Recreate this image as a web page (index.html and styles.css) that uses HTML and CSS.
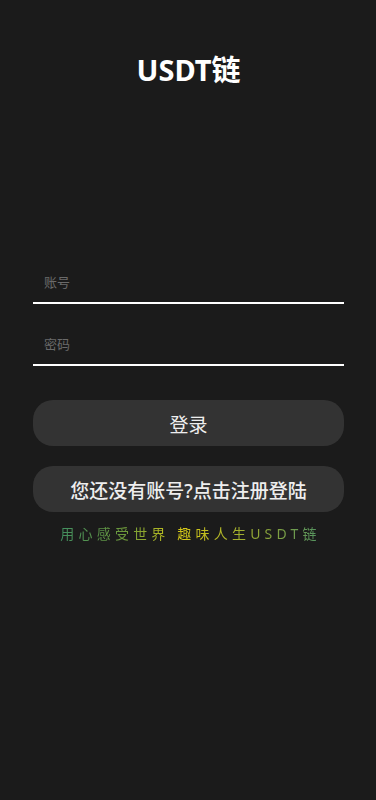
FILE: index.html
```
<!DOCTYPE html>
<html lang="zh-CN">
  <head>
    <meta charset="UTF-8" />
    <meta name="viewport" content="width=device-width, initial-scale=1.0" />
    <title>USDT链</title>
    <link rel="stylesheet" href="styles.css">
  </head>
  <body>
    <div class="page">
      <h1 class="title">USDT链</h1>

      <form class="login-form" onsubmit="return false">
        <div class="field">
          <input type="text" placeholder="账号" />
        </div>
        <div class="field">
          <input type="password" placeholder="密码" />
        </div>
        <button type="submit" class="btn">登录</button>
        <button type="button" class="btn btn-bold">您还没有账号?点击注册登陆</button>
      </form>

      <p class="slogan">用心感受世界 趣味人生USDT链</p>
    </div>
  </body>
</html>
```

FILE: styles.css
```
* {
  box-sizing: border-box;
}
html,
body {
  margin: 0;
  background: #1b1b1b;
}
body {
  font-family: "Noto Sans", "Noto Sans CJK SC", sans-serif;
  color: #fff;
  min-height: 800px;
}
.page {
  padding: 0 32px 0 33px;
}
.title {
  margin: 0;
  padding-top: 50px;
  font-size: 29px;
  font-weight: bold;
  text-align: center;
  line-height: 40px;
}
.login-form {
  display: flex;
  flex-direction: column;
  margin-top: 172px;
}
.field {
  border-bottom: 2px solid #fff;
  margin-bottom: 20px;
}
.field input {
  display: block;
  width: 100%;
  height: 40px;
  padding: 0 11px;
  border: none;
  outline: none;
  background: transparent;
  color: #fff;
  font-family: inherit;
  font-size: 13px;
}
.field input::placeholder {
  color: #6a6a6a;
}
.btn {
  height: 46px;
  margin-top: 14px;
  margin-bottom: 6px;
  padding-top: 2px;
  border: none;
  border-radius: 20px;
  background: #333333;
  color: #eeeeee;
  font-family: inherit;
  font-size: 19px;
  cursor: pointer;
}
.btn + .btn {
  margin-top: 14px;
}
.btn-bold {
  font-weight: 500;
}
.slogan {
  margin: 5px 0 0;
  text-align: center;
  font-size: 14px;
  letter-spacing: 4.2px;
  padding-left: 4px;
  background: linear-gradient(to right, #2e8a70, #6f9a3a 30%, #d6c816 48%, #8aa43a 75%, #3a8a72);
  -webkit-background-clip: text;
  background-clip: text;
  color: transparent;
}
```
